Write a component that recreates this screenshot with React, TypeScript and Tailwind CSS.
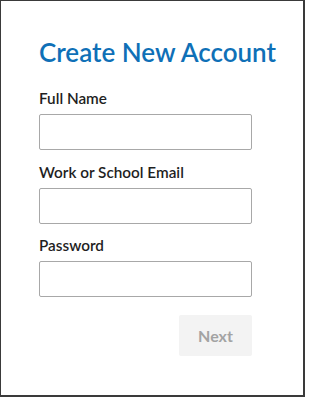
import React from "react";

const fields = [
  { id: "fullName", label: "Full Name", type: "text" },
  { id: "email", label: "Work or School Email", type: "email" },
  { id: "password", label: "Password", type: "password" },
];

export default function App() {
  return (
    <div className="h-[397px] w-[305px] bg-white border-t border-l border-r-2 border-b-2 border-[#3a3a3a] font-['Lato',sans-serif]">
      <div className="pl-[38px] pt-[35px]">
        <h1 className="whitespace-nowrap text-[26px] leading-[32px] font-semibold text-[#0f70b7]">
          Create New Account
        </h1>
        <form className="mt-[19px] flex w-[213px] flex-col gap-[10.5px]" onSubmit={(e) => e.preventDefault()}>
          {fields.map((f) => (
            <div key={f.id} className="flex flex-col">
              <label htmlFor={f.id} className="mb-[5px] text-[15.3px] leading-[22px] font-semibold text-[#1f1f1f]">
                {f.label}
              </label>
              <input
                id={f.id}
                type={f.type}
                className="h-[36px] w-[213px] rounded-[2px] border border-[#a8a8a8] bg-white px-2 text-[15px] outline-none"
              />
            </div>
          ))}
          <div className="mt-[7.5px] flex justify-end">
            <button
              type="submit"
              disabled
              className="h-[41px] w-[73px] rounded-[2px] bg-[#f3f3f3] text-[16px] font-bold text-[#a3a3a3]"
            >
              Next
            </button>
          </div>
        </form>
      </div>
    </div>
  );
}
